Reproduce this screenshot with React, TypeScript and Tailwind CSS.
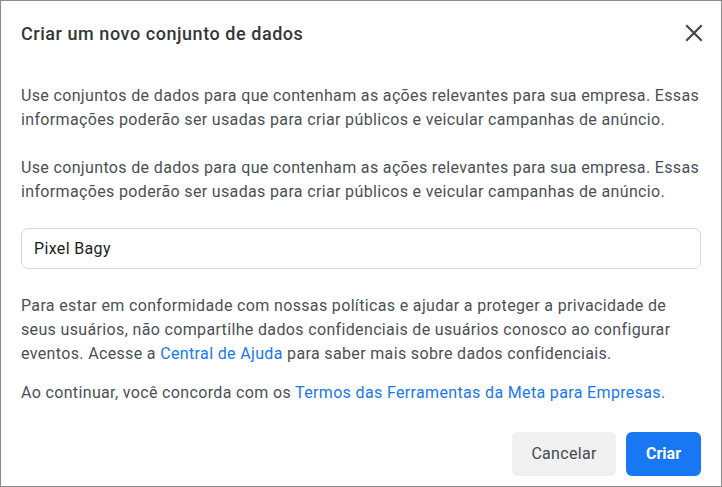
import React from "react";

export default function App() {
  return (
    <div
      className="relative w-[722px] h-[487px] bg-white border border-[#8a8a8a] flex flex-col overflow-hidden text-[#4b4f56]"
      style={{ fontFamily: "Roboto, 'Liberation Sans', sans-serif" }}
    >
      <div className="flex items-center justify-between pl-5 pr-[15px] h-[64px] shrink-0">
        <h1 className="text-[18px] font-medium tracking-[0.55px] text-[#333639]">Criar um novo conjunto de dados</h1>
        <button className="w-6 h-6 flex items-center justify-center text-[#444950]">
          <svg width="18" height="18" viewBox="0 0 18 18" fill="none" stroke="currentColor" strokeWidth="2.2" strokeLinecap="square">
            <path d="M2 2 L16 16 M16 2 L2 16" />
          </svg>
        </button>
      </div>
      <div className="flex flex-col pl-5 pr-[18px] text-[16px] tracking-[0.35px] leading-[24px]">
        <p className="mt-[19px]">
          Use conjuntos de dados para que contenham as ações relevantes para sua empresa. Essas informações poderão ser usadas para criar públicos e veicular campanhas de anúncio.
        </p>
        <p className="mt-[24px]">
          Use conjuntos de dados para que contenham as ações relevantes para sua empresa. Essas informações poderão ser usadas para criar públicos e veicular campanhas de anúncio.
        </p>
        <div className="mt-[24px] mr-[2px] h-[41px] border border-[#d5d7db] rounded-[7px] flex items-center px-3 text-[#1c1e21]">
          Pixel Bagy
        </div>
        <p className="mt-[25px]">
          Para estar em conformidade com nossas políticas e ajudar a proteger a privacidade de seus usuários, não compartilhe dados confidenciais de usuários conosco ao configurar eventos. Acesse a{" "}
          <span className="text-[#1877f2]">Central de Ajuda</span> para saber mais sobre dados confidenciais.
        </p>
        <p className="mt-[15px]">
          Ao continuar, você concorda com os{" "}
          <span className="text-[#1877f2]">Termos das Ferramentas da Meta para Empresas.</span>
        </p>
      </div>
      <div className="mt-auto flex justify-end gap-[10px] px-5 pb-[10px]">
        <button className="h-[44px] w-[104px] rounded-[6px] bg-[#f0f0f0] text-[#444950] text-[16px] tracking-[0.3px]">Cancelar</button>
        <button className="h-[44px] w-[75px] rounded-[6px] bg-[#1877f2] text-white text-[16px] font-bold">Criar</button>
      </div>
      <div className="absolute left-[305px] bottom-[-1px] w-[111px] h-px bg-[#1d4a7c]" />
    </div>
  );
}
